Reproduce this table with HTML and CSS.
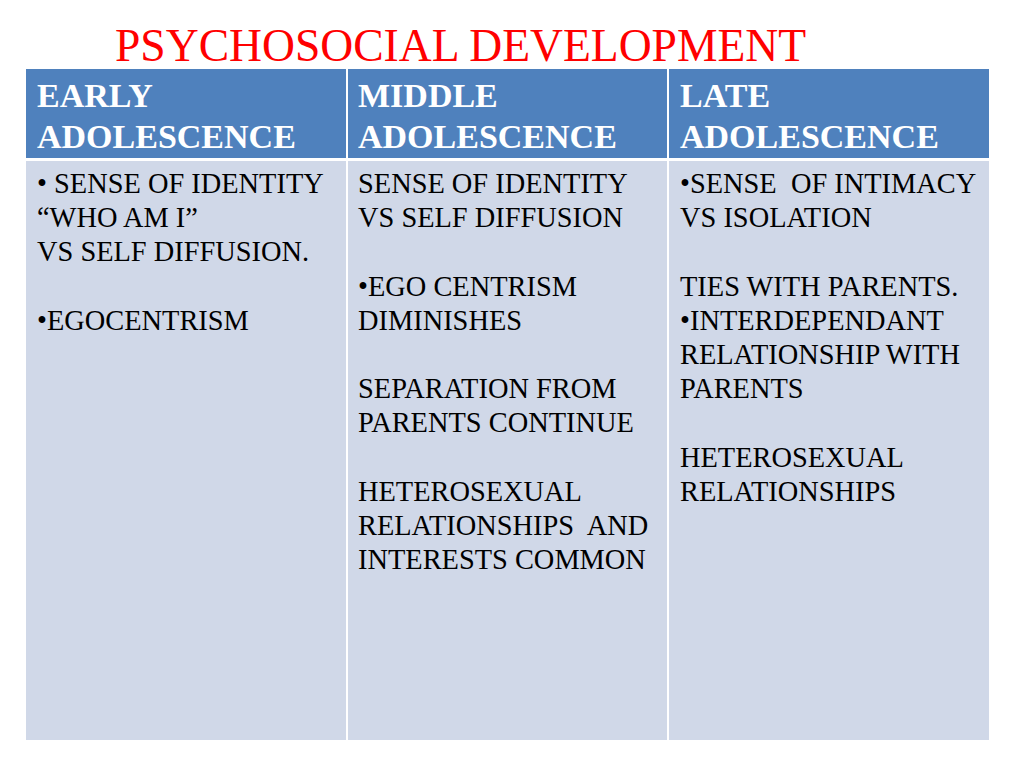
FILE: index.html
```html
<!DOCTYPE html>
<html>
<head>
<meta charset="utf-8">
<link rel="stylesheet" href="styles.css">
</head>
<body>
<h1 class="title">PSYCHOSOCIAL DEVELOPMENT</h1>
<div class="table">
  <div class="head">EARLY<br>ADOLESCENCE</div>
  <div class="head">MIDDLE<br>ADOLESCENCE</div>
  <div class="head">LATE<br>ADOLESCENCE</div>
  <div class="cell">• SENSE OF IDENTITY<br>“WHO AM I”<br>VS SELF DIFFUSION.<br><br>•EGOCENTRISM</div>
  <div class="cell">SENSE OF IDENTITY<br>VS SELF DIFFUSION<br><br>•EGO CENTRISM<br>DIMINISHES<br><br>SEPARATION FROM<br>PARENTS CONTINUE<br><br>HETEROSEXUAL<br>RELATIONSHIPS&nbsp; AND<br>INTERESTS COMMON</div>
  <div class="cell">•SENSE&nbsp; OF INTIMACY<br>VS ISOLATION<br><br>TIES WITH PARENTS.<br>•INTERDEPENDANT<br>RELATIONSHIP WITH<br>PARENTS<br><br>HETEROSEXUAL<br>RELATIONSHIPS</div>
</div>
</body>
</html>
```
FILE: styles.css
```css
html, body {
  margin: 0;
  padding: 0;
  background: #ffffff;
}
body {
  width: 1024px;
  height: 768px;
  overflow: hidden;
  font-family: "Liberation Serif", "Times New Roman", serif;
}
.title {
  margin: 0;
  padding: 23px 0 0 115px;
  height: 46px;
  box-sizing: content-box;
  font-weight: normal;
  font-size: 45.6px;
  line-height: 46px;
  color: #ff0000;
  white-space: nowrap;
}
.table {
  margin-left: 26px;
  width: 963px;
  display: grid;
  grid-template-columns: 320px 319px 320px;
  grid-template-rows: 89px 579px;
  column-gap: 2px;
  row-gap: 3px;
  background: #ffffff;
}
.head {
  background: #4f81bd;
  color: #ffffff;
  font-weight: bold;
  font-size: 34px;
  line-height: 41px;
  padding: 6px 0 0 11px;
}
.cell {
  background: #d0d8e8;
  color: #000000;
  font-size: 28.4px;
  line-height: 34.2px;
  padding: 6px 0 0 11px;
  white-space: nowrap;
}
.cell:nth-child(5),
.head:nth-child(2) {
  padding-left: 10px;
}
```
